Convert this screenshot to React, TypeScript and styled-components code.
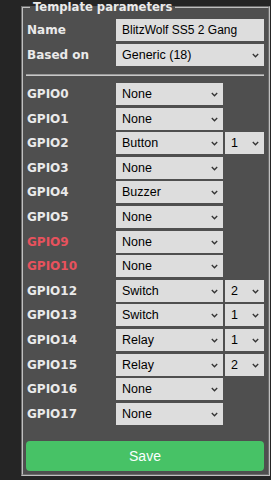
import { Fragment } from 'react';
import styled, { createGlobalStyle } from 'styled-components';

const GlobalStyle = createGlobalStyle`
  html, body {
    margin: 0;
    padding: 0;
    background: #252525;
  }
  body {
    font-family: "DejaVu Sans", Verdana, sans-serif;
    color: #eaeaea;
  }
`;

const Page = styled.main`
  padding: 0 1px 3px 21px;
`;

const Fieldset = styled.fieldset`
  margin: 0;
  background: #4f4f4f;
  border: 2px groove #c0c0c0;
  padding: 3px 4px 3px 3px;
  min-width: 0;
`;

const Legend = styled.legend`
  margin-left: 4px;
  padding: 0 3px;
  font-weight: 700;
  font-size: 11.6px;
  line-height: 14px;
  color: #eaeaea;
`;

const Grid = styled.div`
  display: grid;
  grid-template-columns: 88px 107px 39px;
  column-gap: 2px;
  align-items: center;
`;

const TopGrid = styled(Grid)`
  row-gap: 3px;
  margin-top: 2px;
`;

const GpioGrid = styled(Grid)`
  row-gap: 2.6px;
`;

const Label = styled.span<{ $warn?: boolean }>`
  font-weight: 700;
  font-size: 12px;
  padding-left: 1px;
  color: ${({ $warn }) => ($warn ? '#e8525d' : '#eaeaea')};
  grid-column: 1;
`;

const TextInput = styled.input`
  grid-column: 2 / span 2;
  box-sizing: border-box;
  height: 22px;
  border: 0;
  border-radius: 0;
  background: #dddddd;
  color: #000;
  font-family: "Liberation Sans", Arial, sans-serif;
  font-size: 12px;
  padding: 0 6px;
  outline: none;
`;

const SelectBox = styled.div<{ $wide?: boolean }>`
  position: relative;
  grid-column: ${({ $wide }) => ($wide ? '2 / span 2' : 'auto')};
  height: 22px;
`;

const Select = styled.select`
  appearance: none;
  -webkit-appearance: none;
  box-sizing: border-box;
  width: 100%;
  height: 22px;
  border: 0;
  border-radius: 0;
  background: #dddddd;
  color: #000;
  font-family: "Liberation Sans", Arial, sans-serif;
  font-size: 12.5px;
  padding: 0 16px 0 6px;
  outline: none;
`;

const Chevron = styled.svg`
  position: absolute;
  right: 5px;
  top: 9px;
  width: 7px;
  height: 5px;
  pointer-events: none;
`;

const Divider = styled.hr`
  margin: 8px 0 7px;
  border: 0;
  border-top: 1px solid #9a9a9a;
  border-bottom: 1px solid #c8c8c8;
`;

const SaveButton = styled.button`
  display: block;
  width: 100%;
  height: 30px;
  margin-top: 16px;
  border: 0;
  border-radius: 4px;
  background: #47c266;
  color: #faffff;
  font-family: "Liberation Sans", Arial, sans-serif;
  font-size: 14px;
  cursor: pointer;
`;

const functions = ['None', 'Button', 'Switch', 'Relay', 'Buzzer'];
const indexes = ['1', '2', '3', '4'];

type Gpio = { pin: string; fn: string; idx?: string; warn?: boolean };

const gpios: Gpio[] = [
  { pin: 'GPIO0', fn: 'None' },
  { pin: 'GPIO1', fn: 'None' },
  { pin: 'GPIO2', fn: 'Button', idx: '1' },
  { pin: 'GPIO3', fn: 'None' },
  { pin: 'GPIO4', fn: 'Buzzer' },
  { pin: 'GPIO5', fn: 'None' },
  { pin: 'GPIO9', fn: 'None', warn: true },
  { pin: 'GPIO10', fn: 'None', warn: true },
  { pin: 'GPIO12', fn: 'Switch', idx: '2' },
  { pin: 'GPIO13', fn: 'Switch', idx: '1' },
  { pin: 'GPIO14', fn: 'Relay', idx: '1' },
  { pin: 'GPIO15', fn: 'Relay', idx: '2' },
  { pin: 'GPIO16', fn: 'None' },
  { pin: 'GPIO17', fn: 'None' },
];

function Arrow() {
  return (
    <Chevron viewBox="0 0 7 5">
      <path d="M0.8 1 L3.5 3.8 L6.2 1" fill="none" stroke="#333" strokeWidth="1.3" />
    </Chevron>
  );
}

function Dropdown({ options, value, wide }: { options: string[]; value: string; wide?: boolean }) {
  return (
    <SelectBox $wide={wide}>
      <Select defaultValue={value}>
        {options.map((o) => (
          <option key={o} value={o}>
            {o}
          </option>
        ))}
      </Select>
      <Arrow />
    </SelectBox>
  );
}

export default function App() {
  return (
    <Page>
      <GlobalStyle />
      <Fieldset>
        <Legend>Template parameters</Legend>
        <TopGrid>
          <Label>Name</Label>
          <TextInput defaultValue="BlitzWolf SS5 2 Gang" />
          <Label>Based on</Label>
          <Dropdown wide options={['Generic (18)', 'Sonoff Basic (1)']} value="Generic (18)" />
        </TopGrid>
        <Divider />
        <GpioGrid>
          {gpios.map((g) => (
            <Fragment key={g.pin}>
              <Label $warn={g.warn}>{g.pin}</Label>
              <Dropdown options={functions} value={g.fn} />
              {g.idx ? <Dropdown options={indexes} value={g.idx} /> : <span />}
            </Fragment>
          ))}
        </GpioGrid>
        <SaveButton>Save</SaveButton>
      </Fieldset>
    </Page>
  );
}
